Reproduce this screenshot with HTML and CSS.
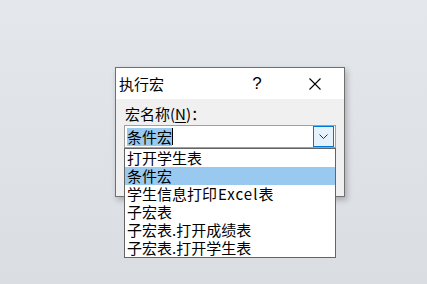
FILE: index.html
```html
<!DOCTYPE html>
<html lang="zh-CN">
<head>
    <meta charset="UTF-8">
    <meta name="viewport" content="width=device-width, initial-scale=1.0">
    <title>执行宏</title>
    <link rel="stylesheet" href="styles.css">
</head>
<body>
    <div class="dialog">
        <div class="titlebar">
            <div class="title">执行宏</div>
            <div class="help">?</div>
            <div class="close">
                <svg width="12" height="12" viewBox="0 0 12 12">
                    <path d="M0.5 0.5 L11.5 11.5 M11.5 0.5 L0.5 11.5" stroke="#000" stroke-width="1.1" fill="none"/>
                </svg>
            </div>
        </div>

        <div class="content">
            <div class="label">宏名称(<u>N</u>)：</div>
            <div class="combo-wrap">
                <div class="combo">
                    <div class="combo-text"><span class="selected-text">条件宏</span><span class="caret"></span></div>
                    <div class="combo-button">
                        <svg width="9" height="5" viewBox="0 0 9 5">
                            <path d="M0.5 0.5 L4.5 4.5 L8.5 0.5" stroke="#333" stroke-width="1" fill="none"/>
                        </svg>
                    </div>
                </div>

                <div class="list">
                    <div class="item">打开学生表</div>
                    <div class="item active">条件宏</div>
                    <div class="item">学生信息打印<span class="latin">Excel</span>表</div>
                    <div class="item">子宏表</div>
                    <div class="item">子宏表.打开成绩表</div>
                    <div class="item">子宏表.打开学生表</div>
                </div>
            </div>
        </div>
    </div>
</body>
</html>
```

FILE: styles.css
```css
body {
    margin: 0;
    height: 284px;
    overflow: hidden;
    font-family: "Noto Sans CJK SC", sans-serif;
    background: linear-gradient(to bottom, #e4e7eb, #dadee3);
    color: #000;
}

.dialog {
    margin: 67px 0 0 115px;
    width: 230px;
    height: 130px;
    box-sizing: border-box;
    border: 1px solid #707070;
    background-color: #f0f0f0;
    box-shadow: 2px 3px 6px rgba(0, 0, 0, 0.25);
    display: flex;
    flex-direction: column;
}

.titlebar {
    height: 31px;
    background-color: #fff;
    display: flex;
    align-items: center;
}

.title {
    padding-left: 3px;
    font-size: 15px;
    line-height: 18px;
    flex: 1;
}

.help {
    width: 20px;
    text-align: center;
    font-family: "Liberation Sans", sans-serif;
    font-size: 17px;
    margin-right: 42px;
}

.close {
    display: flex;
    align-items: center;
    justify-content: center;
    width: 12px;
    margin-right: 23px;
}

.content {
    flex: 1;
    padding: 6px 9px 0 8px;
}

.label {
    padding-left: 1px;
    font-size: 15px;
    line-height: 18px;
    height: 20px;
}

.label u {
    text-underline-offset: 2px;
}

.combo-wrap {
    position: relative;
    width: 212px;
}

.combo {
    height: 23px;
    box-sizing: border-box;
    border: 1px solid #a0a0a0;
    background-color: #fff;
    display: flex;
    align-items: center;
    padding: 0 1px 0 2px;
}

.combo-text {
    flex: 1;
    display: flex;
    align-items: center;
    font-size: 15px;
    line-height: 18px;
}

.selected-text {
    background-color: #99c9ef;
}

.caret {
    width: 1px;
    height: 17px;
    background-color: #000;
}

.combo-button {
    width: 21px;
    height: 21px;
    box-sizing: border-box;
    border: 1px solid #0078d7;
    background-color: #e5f1fb;
    display: flex;
    align-items: center;
    justify-content: center;
}

.list {
    position: absolute;
    top: 100%;
    left: 0;
    width: 100%;
    box-sizing: border-box;
    border: 1px solid #646464;
    background-color: #fff;
}

.item {
    height: 18px;
    line-height: 18px;
    padding-left: 2px;
    font-size: 15px;
    white-space: nowrap;
}

.item .latin {
    letter-spacing: 1px;
    padding-left: 1px;
}

.item.active {
    background-color: #99c9ef;
}
```
